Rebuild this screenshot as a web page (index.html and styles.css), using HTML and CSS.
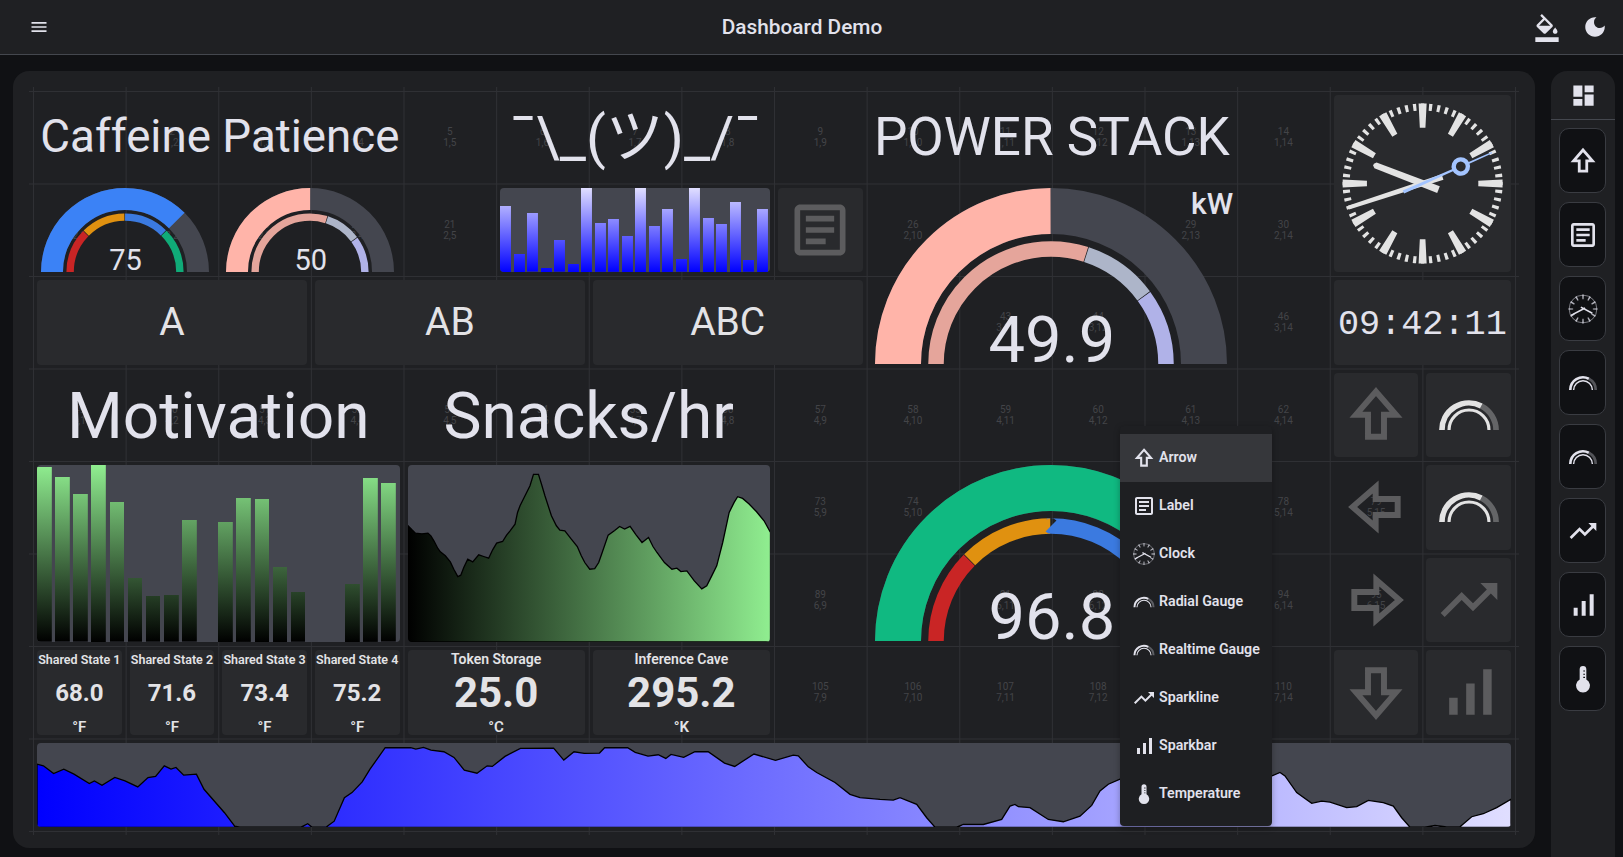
FILE: index.html
```html
<!DOCTYPE html>
<html lang="en">
<head>
    <meta charset="UTF-8">
    <meta name="viewport" content="width=device-width, initial-scale=1.0">
    <title>Dashboard Demo</title>
    <link rel="stylesheet" href="styles.css">
</head>
<body>

<!-- Icon sheet, used by the tiles, the sidebar and the menu -->
<svg class="sprite" aria-hidden="true">
    <path id="arc-out" d="M-153 0A153 153 0 0 1 153 0" pathLength="100"/>
    <path id="arc-in" d="M-115 0A115 115 0 0 1 115 0" pathLength="100"/>
    <symbol id="i-arrow" viewBox="0 0 24 24">
        <path d="M12 3.75 19.06 11.88H14.82V19.65H9.18V11.88H4.94Z" fill="none" stroke="currentColor" stroke-width="2.1" stroke-miterlimit="6"/>
    </symbol>
    <symbol id="i-label" viewBox="0 0 24 24">
        <path fill="currentColor" d="M19 5v14H5V5h14m0-2H5c-1.1 0-2 .9-2 2v14c0 1.1.9 2 2 2h14c1.1 0 2-.9 2-2V5c0-1.1-.9-2-2-2zM14 17H7v-2h7v2zm3-4H7v-2h10v2zm0-4H7V7h10v2z"/>
    </symbol>
    <symbol id="i-clock" viewBox="0 0 24 24">
        <circle cx="12" cy="12" r="10.4" fill="none" stroke="currentColor" stroke-width=".7" opacity=".55"/>
        <circle cx="12" cy="12" r="9.1" fill="none" stroke="currentColor" stroke-width="3.4" pathLength="12" stroke-dasharray=".24 .76" stroke-dashoffset=".12" opacity=".75"/>
        <path d="M13.6 11.2 3 16.8M10.4 10.6 19 15.2" fill="none" stroke="currentColor" stroke-width="1.2"/>
    </symbol>
    <symbol id="i-gauge" viewBox="0 0 24 24">
        <path d="M16.34 8.8A9.55 9.55 0 0 1 21.55 17.3" fill="none" stroke="currentColor" stroke-width="2" opacity=".32"/>
        <path d="M2.45 17.3A9.55 9.55 0 0 1 16.34 8.8" fill="none" stroke="currentColor" stroke-width="2"/>
        <path d="M4.95 17.3A7.05 7.05 0 0 1 19.05 17.3" fill="none" stroke="currentColor" stroke-width="1.1"/>
    </symbol>
    <symbol id="i-spark" viewBox="0 0 24 24">
        <path fill="currentColor" d="M16 6l2.29 2.29-4.88 4.88-4-4L2 16.59 3.41 18l6-6 4 4 6.3-6.29L22 12V6z"/>
    </symbol>
    <symbol id="i-bars" viewBox="0 0 24 24">
        <path fill="currentColor" d="M17 4h3v16h-3V4zM5 14h3v6H5v-6zm6-5h3v11h-3V9z"/>
    </symbol>
    <symbol id="i-thermo" viewBox="0 0 24 24">
        <path fill="currentColor" fill-rule="evenodd" d="M9.5 4.7a2.5 2.5 0 0 1 5 0v7.6a5.2 5.2 0 1 1-5 0zM12.2 5.6v.8h1.3v-.8zM12.2 8v.8h1.3V8zM12.2 10.4v.8h1.3v-.8z"/>
    </symbol>
</svg>

<header class="topbar">
    <div class="topbar-left">
        <svg class="menu-icon" viewBox="0 0 24 24"><path fill="currentColor" d="M3 18h18v-2H3v2zm0-5h18v-2H3v2zm0-7v2h18V6H3z"/></svg>
    </div>
    <div class="topbar-title">Dashboard Demo</div>
    <div class="topbar-right">
        <svg class="paint-icon" viewBox="0 0 24 24"><path fill="currentColor" d="M16.56 8.94L7.62 0 6.21 1.41l2.38 2.38-5.15 5.15c-.59.59-.59 1.54 0 2.12l5.5 5.5c.29.29.68.44 1.06.44s.77-.15 1.06-.44l5.5-5.5c.59-.58.59-1.53 0-2.12zM5.21 10L10 5.21 14.79 10H5.21zM19 11.5s-2 2.17-2 3.5c0 1.1.9 2 2 2s2-.9 2-2c0-1.33-2-3.5-2-3.5zM2 20h20v4H2v-4z"/></svg>
        <svg class="moon-icon" viewBox="0 0 24 24"><path fill="currentColor" d="M12 3c-4.97 0-9 4.03-9 9s4.03 9 9 9 9-4.03 9-9c0-.46-.04-.92-.1-1.36-.98 1.37-2.58 2.26-4.4 2.26-2.98 0-5.4-2.42-5.4-5.4 0-1.81.89-3.42 2.26-4.4-.44-.06-.9-.1-1.36-.1z"/></svg>
    </div>
</header>

<div class="content">
    <main class="panel">
        <div class="board">
            <!-- Numbered cells under the widgets -->
            <div class="cells">
                <span>1<br>1,1</span><span>2<br>1,2</span><span>3<br>1,3</span><span>4<br>1,4</span><span>5<br>1,5</span><span>6<br>1,6</span><span>7<br>1,7</span><span>8<br>1,8</span><span>9<br>1,9</span><span>10<br>1,10</span><span>11<br>1,11</span><span>12<br>1,12</span><span>13<br>1,13</span><span>14<br>1,14</span><span>15<br>1,15</span><span>16<br>1,16</span>
                <span>17<br>2,1</span><span>18<br>2,2</span><span>19<br>2,3</span><span>20<br>2,4</span><span>21<br>2,5</span><span>22<br>2,6</span><span>23<br>2,7</span><span>24<br>2,8</span><span>25<br>2,9</span><span>26<br>2,10</span><span>27<br>2,11</span><span>28<br>2,12</span><span>29<br>2,13</span><span>30<br>2,14</span><span>31<br>2,15</span><span>32<br>2,16</span>
                <span>33<br>3,1</span><span>34<br>3,2</span><span>35<br>3,3</span><span>36<br>3,4</span><span>37<br>3,5</span><span>38<br>3,6</span><span>39<br>3,7</span><span>40<br>3,8</span><span>41<br>3,9</span><span>42<br>3,10</span><span>43<br>3,11</span><span>44<br>3,12</span><span>45<br>3,13</span><span>46<br>3,14</span><span>47<br>3,15</span><span>48<br>3,16</span>
                <span>49<br>4,1</span><span>50<br>4,2</span><span>51<br>4,3</span><span>52<br>4,4</span><span>53<br>4,5</span><span>54<br>4,6</span><span>55<br>4,7</span><span>56<br>4,8</span><span>57<br>4,9</span><span>58<br>4,10</span><span>59<br>4,11</span><span>60<br>4,12</span><span>61<br>4,13</span><span>62<br>4,14</span><span>63<br>4,15</span><span>64<br>4,16</span>
                <span>65<br>5,1</span><span>66<br>5,2</span><span>67<br>5,3</span><span>68<br>5,4</span><span>69<br>5,5</span><span>70<br>5,6</span><span>71<br>5,7</span><span>72<br>5,8</span><span>73<br>5,9</span><span>74<br>5,10</span><span>75<br>5,11</span><span>76<br>5,12</span><span>77<br>5,13</span><span>78<br>5,14</span><span>79<br>5,15</span><span>80<br>5,16</span>
                <span>81<br>6,1</span><span>82<br>6,2</span><span>83<br>6,3</span><span>84<br>6,4</span><span>85<br>6,5</span><span>86<br>6,6</span><span>87<br>6,7</span><span>88<br>6,8</span><span>89<br>6,9</span><span>90<br>6,10</span><span>91<br>6,11</span><span>92<br>6,12</span><span>93<br>6,13</span><span>94<br>6,14</span><span>95<br>6,15</span><span>96<br>6,16</span>
                <span>97<br>7,1</span><span>98<br>7,2</span><span>99<br>7,3</span><span>100<br>7,4</span><span>101<br>7,5</span><span>102<br>7,6</span><span>103<br>7,7</span><span>104<br>7,8</span><span>105<br>7,9</span><span>106<br>7,10</span><span>107<br>7,11</span><span>108<br>7,12</span><span>109<br>7,13</span><span>110<br>7,14</span><span>111<br>7,15</span><span>112<br>7,16</span>
                <span>113<br>8,1</span><span>114<br>8,2</span><span>115<br>8,3</span><span>116<br>8,4</span><span>117<br>8,5</span><span>118<br>8,6</span><span>119<br>8,7</span><span>120<br>8,8</span><span>121<br>8,9</span><span>122<br>8,10</span><span>123<br>8,11</span><span>124<br>8,12</span><span>125<br>8,13</span><span>126<br>8,14</span><span>127<br>8,15</span><span>128<br>8,16</span>
            </div>

            <div class="widgets">
                <!-- Row 1 -->
                <div class="widget heading heading-md at-r1 c1-2">Caffeine</div>
                <div class="widget heading heading-md at-r1 c3-4">Patience</div>
                <div class="widget heading heading-shrug at-r1 c6-8">¯\_(ツ)_/¯</div>
                <div class="widget heading heading-power at-r1 c10-13">POWER STACK</div>

                <div class="widget at-r1-2 c15-16">
                    <div class="card clock-card">
                        <svg class="clock" viewBox="-88.5 -88.5 177 177">
                            <circle class="clock-mins" r="76.5" pathLength="60"/>
                            <circle class="clock-hours" r="67.85" pathLength="12"/>
                            <g transform="rotate(291)"><path class="clock-hand" d="M-3.6 17H3.6L3 -50.5 1 -52.6H-1L-3 -50.5Z"/></g>
                            <g transform="rotate(252)"><path class="clock-hand" d="M-2.8 21H2.8L1.9 -78H-1.9Z"/></g>
                            <g transform="rotate(66)">
                                <path class="clock-sec" d="M-1.7 21H1.7L.6 -76H-.6Z"/>
                                <circle class="clock-disk" cy="-41.8" r="7.1"/>
                            </g>
                        </svg>
                    </div>
                </div>

                <!-- Row 2 -->
                <div class="widget gauge at-r2 c1-2">
                    <svg class="dial dial-sm" viewBox="-176 -176 352 176">
                        <use href="#arc-out" class="track"/>
                        <use href="#arc-out" class="fill-blue" stroke-dasharray="75 100"/>
                        <use href="#arc-in" class="in-red" stroke-dasharray="24.6 100"/>
                        <use href="#arc-in" class="in-orange" stroke-dasharray="24.6 100" stroke-dashoffset="-25"/>
                        <use href="#arc-in" class="in-blue" stroke-dasharray="24.6 100" stroke-dashoffset="-50"/>
                        <use href="#arc-in" class="in-green" stroke-dasharray="25 100" stroke-dashoffset="-75"/>
                    </svg>
                    <div class="dial-value dial-value-sm">75</div>
                </div>
                <div class="widget gauge at-r2 c3-4">
                    <svg class="dial dial-sm" viewBox="-176 -176 352 176">
                        <use href="#arc-out" class="track"/>
                        <use href="#arc-out" class="fill-pink" stroke-dasharray="50 100"/>
                        <use href="#arc-in" class="in-pink" stroke-dasharray="59.6 100"/>
                        <use href="#arc-in" class="in-steel" stroke-dasharray="19.6 100" stroke-dashoffset="-60"/>
                        <use href="#arc-in" class="in-lav" stroke-dasharray="20 100" stroke-dashoffset="-80"/>
                    </svg>
                    <div class="dial-value dial-value-sm">50</div>
                </div>
                <div class="widget at-r2 c6-8">
                    <div class="bars bars-blue">
                        <i style="height:78.5%"></i><i style="height:21.9%"></i><i style="height:69.3%"></i><i style="height:5.2%"></i><i style="height:37.5%"></i>
                        <i style="height:10%"></i><i style="height:100%"></i><i style="height:57.8%"></i><i style="height:62.5%"></i><i style="height:42.6%"></i>
                        <i style="height:100%"></i><i style="height:55%"></i><i style="height:74.5%"></i><i style="height:15.1%"></i><i style="height:100%"></i>
                        <i style="height:64.1%"></i><i style="height:57%"></i><i style="height:82.9%"></i><i style="height:13.9%"></i><i style="height:74.9%"></i>
                    </div>
                </div>
                <div class="widget at-r2 c9">
                    <div class="card tile"><svg class="tile-icon"><use href="#i-label"/></svg></div>
                </div>
                <div class="widget gauge at-r2-3 c10-13">
                    <svg class="dial dial-lg" viewBox="-176 -176 352 176">
                        <use href="#arc-out" class="track"/>
                        <use href="#arc-out" class="fill-pink" stroke-dasharray="49.9 100"/>
                        <use href="#arc-in" class="in-pink" stroke-dasharray="59.8 100"/>
                        <use href="#arc-in" class="in-steel" stroke-dasharray="19.8 100" stroke-dashoffset="-60"/>
                        <use href="#arc-in" class="in-lav" stroke-dasharray="20 100" stroke-dashoffset="-80"/>
                    </svg>
                    <div class="dial-value dial-value-lg">49.9</div>
                    <div class="dial-unit">kW</div>
                </div>

                <!-- Row 3 -->
                <div class="widget at-r3 c1-3"><div class="card card-text">A</div></div>
                <div class="widget at-r3 c4-6"><div class="card card-text">AB</div></div>
                <div class="widget at-r3 c7-9"><div class="card card-text">ABC</div></div>
                <div class="widget at-r3 c15-16"><div class="card card-time">09:42:11</div></div>

                <!-- Row 4 -->
                <div class="widget heading heading-lg at-r4 c1-4">Motivation</div>
                <div class="widget heading heading-lg at-r4 c5-8">Snacks/hr</div>
                <div class="widget at-r4 c15"><div class="card tile"><svg class="tile-icon"><use href="#i-arrow"/></svg></div></div>
                <div class="widget at-r4 c16"><div class="card tile"><svg class="tile-icon tile-light"><use href="#i-gauge"/></svg></div></div>

                <!-- Rows 5 and 6 -->
                <div class="widget at-r5-6 c1-4">
                    <div class="bars bars-green">
                        <i style="height:98.7%"></i><i style="height:93%"></i><i style="height:83.4%"></i><i style="height:100%"></i><i style="height:78.9%"></i>
                        <i style="height:36%"></i><i style="height:25.8%"></i><i style="height:26.4%"></i><i style="height:68.7%"></i><i style="height:0"></i>
                        <i style="height:67.9%"></i><i style="height:81.3%"></i><i style="height:80.8%"></i><i style="height:42.5%"></i><i style="height:28.1%"></i>
                        <i style="height:0"></i><i style="height:0"></i><i style="height:33%"></i><i style="height:92.6%"></i><i style="height:89.6%"></i>
                    </div>
                </div>
                <div class="widget at-r5-6 c5-8">
                    <div class="spark">
                        <svg viewBox="820 288 728 530" preserveAspectRatio="none">
                            <defs>
                                <linearGradient id="grad-green"><stop offset="0" stop-color="#000000"/><stop offset="1" stop-color="#90ee90"/></linearGradient>
                            </defs>
                            <path fill="url(#grad-green)" stroke="#000000" stroke-width="1.3" vector-effect="non-scaling-stroke" d="M820 818V470L828 482 835 492 848 494 860 492 866 500 872 515 880 538 885 548 895 560 905 578 912 600 920 622 926 618 932 595 940 570 950 578 962 557 972 562 982 567 990 542 998 522 1010 517 1018 498 1025 485 1035 465 1040 430 1045 410 1055 380 1065 350 1072 316 1082 316 1088 345 1095 380 1108 440 1118 470 1125 483 1135 485 1148 510 1160 532 1168 560 1175 580 1185 600 1195 598 1203 580 1210 550 1222 498 1235 484 1245 472 1255 480 1266 472 1278 497 1290 520 1303 505 1312 532 1320 550 1335 580 1350 600 1360 597 1368 607 1380 605 1395 635 1410 659 1420 650 1430 620 1440 590 1452 520 1465 430 1475 400 1482 383 1492 388 1505 405 1520 428 1535 455 1548 490V818Z"/>
                        </svg>
                    </div>
                </div>
                <div class="widget gauge at-r5-6 c10-13">
                    <svg class="dial dial-lg" viewBox="-176 -176 352 176">
                        <use href="#arc-out" class="track"/>
                        <use href="#arc-out" class="fill-green" stroke-dasharray="96.8 100"/>
                        <use href="#arc-in" class="in-red" stroke-dasharray="24.8 100"/>
                        <use href="#arc-in" class="in-orange" stroke-dasharray="24.8 100" stroke-dashoffset="-25"/>
                        <use href="#arc-in" class="in-blue" stroke-dasharray="24.8 100" stroke-dashoffset="-50"/>
                        <use href="#arc-in" class="in-green" stroke-dasharray="25 100" stroke-dashoffset="-75"/>
                    </svg>
                    <div class="dial-value dial-value-lg">96.8</div>
                </div>
                <div class="widget at-r5 c15"><div class="tile"><svg class="tile-icon turn-left"><use href="#i-arrow"/></svg></div></div>
                <div class="widget at-r5 c16"><div class="card tile"><svg class="tile-icon tile-light"><use href="#i-gauge"/></svg></div></div>
                <div class="widget at-r6 c15"><div class="tile"><svg class="tile-icon turn-right"><use href="#i-arrow"/></svg></div></div>
                <div class="widget at-r6 c16"><div class="card tile"><svg class="tile-icon"><use href="#i-spark"/></svg></div></div>

                <!-- Row 7 -->
                <div class="widget at-r7 c1"><div class="card temp"><div class="temp-title">Shared State 1</div><div class="temp-value">68.0</div><div class="temp-unit">°F</div></div></div>
                <div class="widget at-r7 c2"><div class="card temp"><div class="temp-title">Shared State 2</div><div class="temp-value">71.6</div><div class="temp-unit">°F</div></div></div>
                <div class="widget at-r7 c3"><div class="card temp"><div class="temp-title">Shared State 3</div><div class="temp-value">73.4</div><div class="temp-unit">°F</div></div></div>
                <div class="widget at-r7 c4"><div class="card temp"><div class="temp-title">Shared State 4</div><div class="temp-value">75.2</div><div class="temp-unit">°F</div></div></div>
                <div class="widget at-r7 c5-6"><div class="card temp temp-lg"><div class="temp-title">Token Storage</div><div class="temp-value">25.0</div><div class="temp-unit">°C</div></div></div>
                <div class="widget at-r7 c7-8"><div class="card temp temp-lg"><div class="temp-title">Inference Cave</div><div class="temp-value">295.2</div><div class="temp-unit">°K</div></div></div>
                <div class="widget at-r7 c15"><div class="card tile"><svg class="tile-icon turn-down"><use href="#i-arrow"/></svg></div></div>
                <div class="widget at-r7 c16"><div class="card tile"><svg class="tile-icon"><use href="#i-bars"/></svg></div></div>

                <!-- Row 8 -->
                <div class="widget at-r8 c1-16">
                    <div class="spark">
                        <svg viewBox="37 744 1474 84" preserveAspectRatio="none">
                            <defs>
                                <linearGradient id="grad-blue"><stop offset="0" stop-color="#0000ff"/><stop offset="1" stop-color="#e0deff"/></linearGradient>
                            </defs>
                            <path fill="url(#grad-blue)" stroke="#000000" stroke-width="1.3" vector-effect="non-scaling-stroke" d="M37 828V765L43.4 766.7 53.6 774.3 63.8 770 74 775 89.3 784.3 94.4 781.7 102 786 114.8 778.3 125 781.7 137.8 787.7 148 778.3 155.6 777.3 164.3 766.7 171 770 176 768.3 183.7 776 196.4 775 204 790 224.5 813.3 234.7 826.7 239.8 827.7 301 827.7 307.7 824.3 312.2 827.7 326.5 827.3 334.2 821.7 344.4 798.3 352 793.3 362.2 782.7 370 770 385.2 748.7 410.7 748.7 415.8 750 423.5 748.3 431 751 443.9 752.7 454 758.3 464.3 771 477 774 487.2 766.7 492.3 767.3 505 757.3 520.4 749.3 553.6 749 563.8 761 574 752.7 584.2 754.3 599.5 754 604.6 748.7 627.6 748.7 635.2 753.3 648 757 658.2 755.7 665.8 759.3 671 755.3 683.7 758.3 694.9 752.7 708.2 752.7 724.5 764 734.7 767.3 754 755 775.5 761.3 793.3 756 798.3 756.7 808.3 767.7 816.7 773.3 835 783.3 850 795 860 798.3 880 800 893.3 800.7 900 798.3 916.7 805 926.7 818.3 935 827.7 956.7 827.7 963.3 825 983.3 825 1001.7 820 1010 806.7 1015 805 1018.3 807.3 1030 808.3 1048.3 820 1063.3 822.3 1080 816.7 1091.7 806 1100 791.7 1108.3 785 1120 780 1160 775 1200 770 1240 772 1272 776.7 1280 773.3 1285 776.7 1296.7 793.3 1311.7 804 1321.7 801.7 1330 802.7 1346.7 808.3 1356.7 807.3 1368.3 801 1383.3 803.3 1393.3 806.7 1401.7 818.3 1410 827.7 1425 827.7 1435 826 1446.7 827.3 1460 827.3 1471.7 817.3 1483.3 814.3 1496.7 808.3 1511 800V828Z"/>
                        </svg>
                    </div>
                </div>
            </div>

            <!-- Widget picker menu -->
            <nav class="picker">
                <a href="#" class="picker-item active"><svg><use href="#i-arrow"/></svg>Arrow</a>
                <a href="#" class="picker-item"><svg><use href="#i-label"/></svg>Label</a>
                <a href="#" class="picker-item"><svg><use href="#i-clock"/></svg>Clock</a>
                <a href="#" class="picker-item"><svg><use href="#i-gauge"/></svg>Radial Gauge</a>
                <a href="#" class="picker-item"><svg><use href="#i-gauge"/></svg>Realtime Gauge</a>
                <a href="#" class="picker-item"><svg><use href="#i-spark"/></svg>Sparkline</a>
                <a href="#" class="picker-item"><svg><use href="#i-bars"/></svg>Sparkbar</a>
                <a href="#" class="picker-item"><svg><use href="#i-thermo"/></svg>Temperature</a>
            </nav>
        </div>
    </main>

    <aside class="sidebar">
        <div class="sidebar-head">
            <svg class="sidebar-logo" viewBox="0 0 24 24"><path fill="currentColor" d="M3 13h8V3H3v10zm0 8h8v-6H3v6zm10 0h8V11h-8v10zm0-18v6h8V3h-8z"/></svg>
        </div>
        <div class="sidebar-list">
            <button class="sidebar-btn"><svg><use href="#i-arrow"/></svg></button>
            <button class="sidebar-btn"><svg><use href="#i-label"/></svg></button>
            <button class="sidebar-btn"><svg><use href="#i-clock"/></svg></button>
            <button class="sidebar-btn"><svg><use href="#i-gauge"/></svg></button>
            <button class="sidebar-btn"><svg><use href="#i-gauge"/></svg></button>
            <button class="sidebar-btn"><svg><use href="#i-spark"/></svg></button>
            <button class="sidebar-btn"><svg><use href="#i-bars"/></svg></button>
            <button class="sidebar-btn"><svg><use href="#i-thermo"/></svg></button>
        </div>
    </aside>
</div>

</body>
</html>
```

FILE: styles.css
```css
/* Root colors */
:root {
    --page: #101114;
    --panel: #1f2023;
    --card: #292a2d;
    --track: #44464f;
    --text: #e2e2ec;
    --line: #2f3034;
    --border: #44474e;
    --muted: #434448;
    --icon-dim: #5c5c5e;
}

/* General styles */
body {
    margin: 0;
    height: 100vh;
    overflow: hidden;
    display: flex;
    flex-direction: column;
    background: var(--page);
    color: var(--text);
    font-family: Roboto, "Noto Sans CJK JP", sans-serif;
}

.sprite {
    display: none;
}

/* Top bar */
.topbar {
    flex: none;
    height: 54px;
    display: flex;
    align-items: center;
    padding: 0 15px 0 29px;
    background: var(--panel);
    border-bottom: 1px solid var(--border);
}

.topbar-left {
    width: 42px;
    display: flex;
}

.menu-icon {
    width: 20px;
    height: 20px;
}

.topbar-title {
    flex: 1;
    text-align: center;
    font-size: 20.8px;
    font-weight: 500;
}

.topbar-right {
    display: flex;
    align-items: center;
    gap: 21px;
}

.paint-icon {
    width: 28px;
    height: 28px;
    margin-top: 2px;
}

.moon-icon {
    width: 26px;
    height: 26px;
}

/* Page body */
.content {
    flex: 1;
    min-height: 0;
    display: flex;
    align-items: stretch;
    gap: 16px;
    padding: 16px 8px 0 13px;
}

.panel {
    width: 1522px;
    height: 777px;
    box-sizing: border-box;
    padding: 20px 20px 17px;
    background: var(--panel);
    border-radius: 16px;
}

.board {
    position: relative;
    display: grid;
    height: 740px;
}

/* Grid lines run a little past the board on each side */
.board::before,
.board::after {
    content: "";
    position: absolute;
    pointer-events: none;
}

.board::before {
    inset: 0 -4px -1px;
    background: linear-gradient(to bottom, var(--line) 1px, transparent 1px) 0 0 / 100% 92.5px;
}

.board::after {
    inset: -4px -1px -4px 0;
    background: linear-gradient(to right, var(--line) 1px, transparent 1px) 0 0 / 92.625px 100%;
}

.cells,
.widgets {
    grid-area: 1 / 1;
    position: relative;
    z-index: 1;
    display: grid;
    grid-template-columns: repeat(16, 1fr);
    grid-template-rows: repeat(8, 1fr);
    min-width: 0;
    min-height: 0;
}

.cells span {
    display: flex;
    align-items: center;
    justify-content: center;
    text-align: center;
    font-size: 10px;
    line-height: 11px;
    color: var(--muted);
}

/* Grid placement */
.at-r1 { grid-row: 1; }
.at-r2 { grid-row: 2; }
.at-r3 { grid-row: 3; }
.at-r4 { grid-row: 4; }
.at-r5 { grid-row: 5; }
.at-r6 { grid-row: 6; }
.at-r7 { grid-row: 7; }
.at-r8 { grid-row: 8; }
.at-r1-2 { grid-row: 1 / 3; }
.at-r2-3 { grid-row: 2 / 4; }
.at-r5-6 { grid-row: 5 / 7; }

.c1 { grid-column: 1; }
.c2 { grid-column: 2; }
.c3 { grid-column: 3; }
.c4 { grid-column: 4; }
.c9 { grid-column: 9; }
.c15 { grid-column: 15; }
.c16 { grid-column: 16; }
.c1-2 { grid-column: 1 / 3; }
.c3-4 { grid-column: 3 / 5; }
.c1-3 { grid-column: 1 / 4; }
.c4-6 { grid-column: 4 / 7; }
.c7-9 { grid-column: 7 / 10; }
.c5-6 { grid-column: 5 / 7; }
.c7-8 { grid-column: 7 / 9; }
.c6-8 { grid-column: 6 / 9; }
.c1-4 { grid-column: 1 / 5; }
.c5-8 { grid-column: 5 / 9; }
.c10-13 { grid-column: 10 / 14; }
.c15-16 { grid-column: 15 / 17; }
.c1-16 { grid-column: 1 / 17; }

/* Widgets */
.widget {
    padding: 4px;
    min-width: 0;
    min-height: 0;
    display: flex;
}

.card {
    flex: 1;
    min-width: 0;
    background: var(--card);
    border-radius: 4px;
}

.heading {
    align-items: center;
    justify-content: center;
    white-space: nowrap;
    line-height: 1;
}

.heading-md {
    font-size: 45.7px;
}

.heading-shrug {
    font-size: 58px;
}

.heading-power {
    font-size: 53px;
}

.heading-lg {
    font-size: 64px;
    padding-top: 8px;
}

.card-text {
    display: flex;
    align-items: center;
    justify-content: center;
    font-size: 39px;
    color: #e3e3e6;
}

.card-time {
    display: flex;
    align-items: center;
    justify-content: center;
    padding-top: 5px;
    font-family: "Liberation Mono", monospace;
    font-size: 35.2px;
}

/* Tiles with a single icon */
.tile {
    flex: 1;
    display: flex;
    align-items: center;
    justify-content: center;
    color: var(--icon-dim);
}

.tile-icon {
    width: 68px;
    height: 68px;
}

.tile-light {
    color: #e3e3e3;
}

.turn-left {
    transform: rotate(-90deg);
}

.turn-right {
    transform: rotate(90deg);
}

.turn-down {
    transform: rotate(180deg);
}

/* Clock */
.clock-card {
    display: flex;
}

.clock {
    width: 100%;
    height: 100%;
}

.clock-mins,
.clock-hours {
    fill: none;
    stroke: #e3e3e3;
}

.clock-mins {
    stroke-width: 7px;
    stroke-dasharray: .4 .6;
    stroke-dashoffset: .2;
}

.clock-hours {
    stroke-width: 24.3px;
    stroke-dasharray: .197 .803;
    stroke-dashoffset: .0985;
}

.clock-hand {
    fill: #e3e3e3;
}

.clock-sec {
    fill: #a3c4ff;
}

.clock-disk {
    fill: var(--card);
    stroke: #a3c4ff;
    stroke-width: 4.4px;
}

/* Gauges: the dial and its value share one grid cell */
.gauge {
    display: grid;
    justify-items: center;
}

.gauge > * {
    grid-area: 1 / 1;
    align-self: end;
}

.dial {
    display: block;
    fill: none;
    margin-right: 1px;
}

.dial-sm {
    width: 168px;
    height: 84px;
}

.dial-lg {
    width: 352px;
    height: 176px;
    margin-bottom: 1px;
}

.track { stroke: var(--track); }
.fill-blue { stroke: #3b82f6; }
.fill-pink { stroke: #ffb4a9; }
.fill-green { stroke: #10b981; }
.in-red { stroke: #c92525; }
.in-orange { stroke: #e09110; }
.in-blue { stroke: #3b7ae0; }
.in-green { stroke: #10ab78; }
.in-pink { stroke: #e5a59b; }
.in-steel { stroke: #adb5c9; }
.in-lav { stroke: #b0b2e8; }

use[href="#arc-out"] { stroke-width: 46px; }
use[href="#arc-in"] { stroke-width: 15.5px; }

.dial-value {
    line-height: 1;
}

.dial-value-sm {
    font-size: 29px;
    margin-bottom: -3px;
}

.dial-value-lg {
    font-size: 65px;
    margin-bottom: -8px;
}

.gauge > .dial-unit {
    justify-self: end;
    align-self: start;
    font-size: 30px;
    font-weight: 500;
    line-height: 1;
    margin-top: 1px;
}

/* Bar charts. The gradient is sized to the chart, so a short bar only shows the dark end */
.bars {
    flex: 1;
    display: flex;
    align-items: flex-end;
    background: var(--track);
    border-radius: 4px;
    overflow: hidden;
}

.bars i {
    flex: 1;
    min-width: 0;
    background-repeat: no-repeat;
    background-position: bottom;
}

.bars-blue i {
    margin-right: 2.6px;
    background-image: linear-gradient(to top, #0000ff, #e0deff);
    background-size: 100% 84px;
}

.bars-green i {
    margin-right: 3.5px;
    background-image: linear-gradient(to top, #000000, #90ee90);
    background-size: 100% 177px;
}

/* Area charts */
.spark {
    flex: 1;
    min-width: 0;
    background: var(--track);
    border-radius: 4px;
    overflow: hidden;
}

.spark svg {
    display: block;
    width: 100%;
    height: 100%;
}

/* Temperature cards */
.temp {
    display: flex;
    flex-direction: column;
    align-items: center;
    justify-content: space-between;
    padding: 2px 0 0;
    white-space: nowrap;
    color: #e3e3e6;
}

.temp-title {
    font-size: 12.5px;
    font-weight: 600;
    line-height: 15px;
}

.temp-value {
    font-size: 24px;
    font-weight: 700;
    line-height: 1;
}

.temp-unit {
    font-size: 15px;
    font-weight: 600;
    line-height: 15px;
}

.temp-lg .temp-title {
    font-size: 14px;
}

.temp-lg .temp-value {
    font-size: 42px;
}

/* Widget picker menu */
.picker {
    position: absolute;
    z-index: 2;
    top: 335px;
    left: 1087px;
    width: 152px;
    padding: 8px 0;
    background: #1e1f22;
    border-radius: 4px;
    box-shadow: 0 2px 6px rgba(0, 0, 0, 0.3);
}

.picker-item {
    display: flex;
    align-items: center;
    gap: 3px;
    box-sizing: border-box;
    height: 48px;
    padding: 0 0 2px 12px;
    color: var(--text);
    font-size: 14.2px;
    font-weight: 600;
    text-decoration: none;
}

.picker-item svg {
    width: 24px;
    height: 24px;
    margin-top: 2px;
}

.picker-item.active {
    background: #36373b;
}

/* Right sidebar */
.sidebar {
    width: 64px;
    background: var(--panel);
    border-radius: 16px 16px 0 0;
}

.sidebar-head {
    height: 48px;
    display: flex;
    align-items: center;
    justify-content: center;
    border-bottom: 1px solid var(--border);
}

.sidebar-logo {
    width: 27px;
    height: 27px;
}

.sidebar-list {
    display: flex;
    flex-direction: column;
    gap: 9px;
    padding: 8px;
}

.sidebar-btn {
    width: 47px;
    height: 65px;
    padding: 0;
    display: flex;
    align-items: center;
    justify-content: center;
    color: var(--text);
    background: var(--page);
    border: 1px solid #3a3c42;
    border-radius: 10px;
}

.sidebar-btn svg {
    width: 32px;
    height: 32px;
}
```
